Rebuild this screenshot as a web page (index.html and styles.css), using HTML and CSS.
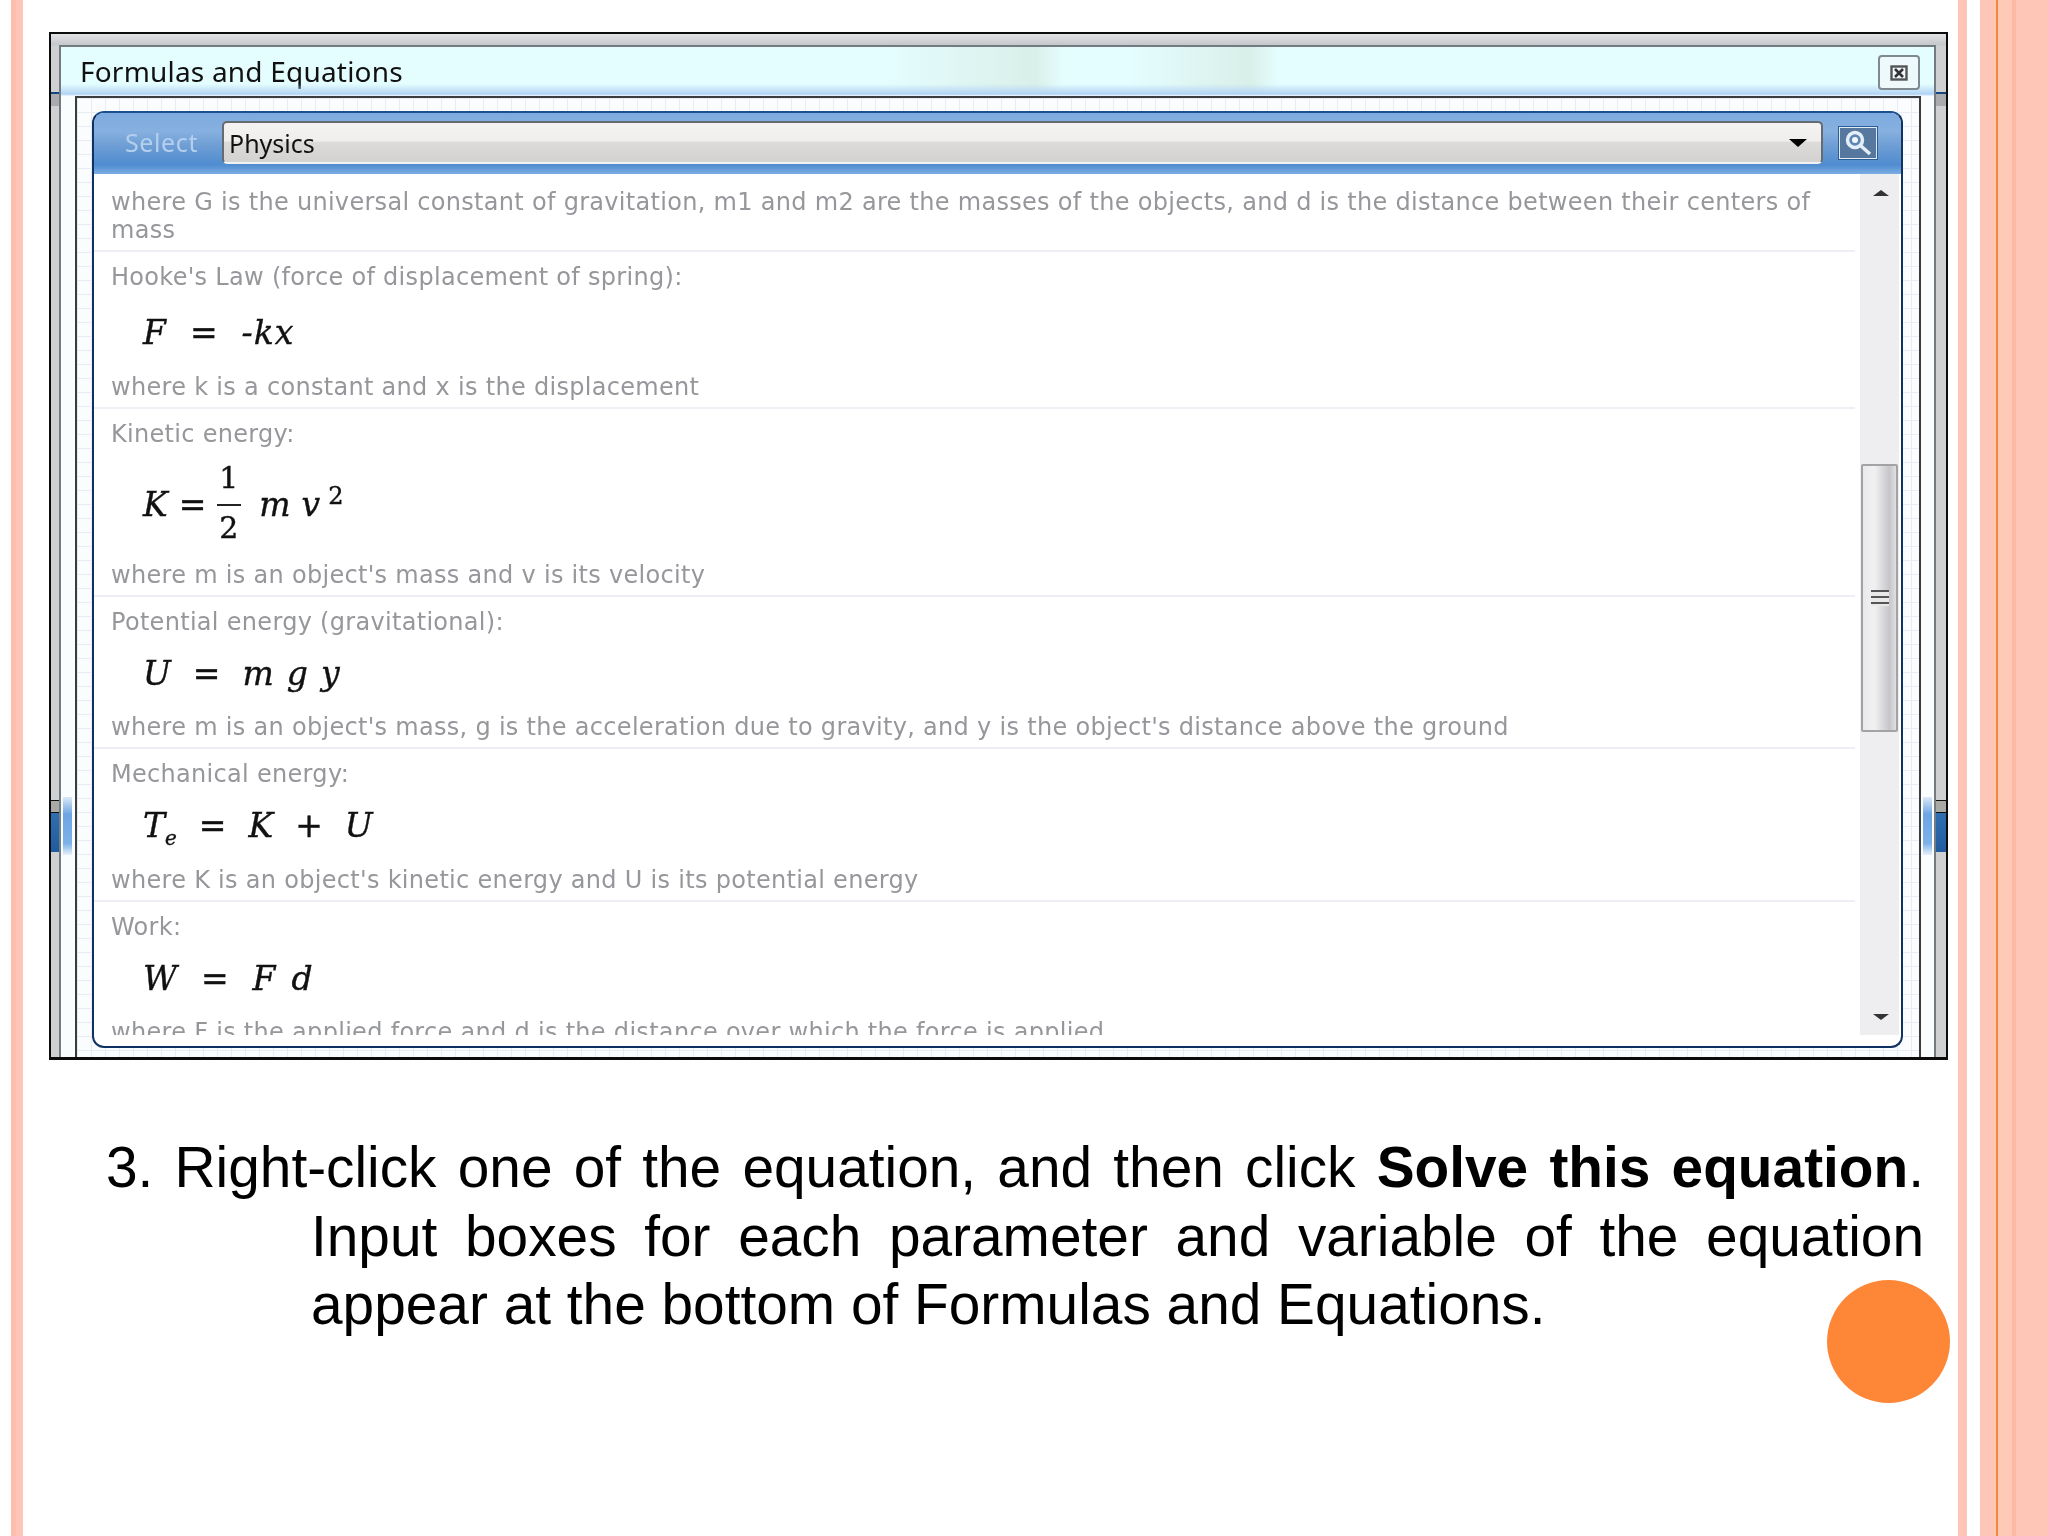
FILE: index.html
```html
<!DOCTYPE html>
<html lang="en">
<head>
    <meta charset="UTF-8">
    <title>Formulas and Equations</title>
    <link rel="stylesheet" href="styles.css">
</head>
<body>
<div class="slide">
    <div class="window">
        <div class="edge edge-top edge-l"></div>
        <div class="edge edge-top edge-r"></div>
        <div class="edge edge-low edge-l"></div>
        <div class="edge edge-low edge-r"></div>
        <div class="dialog">
            <div class="glow glow-left"></div>
            <div class="glow glow-right"></div>
            <div class="titlebar">
                <span class="title">Formulas and Equations</span>
                <button class="close">
                    <svg width="18" height="16" viewBox="0 0 18 16">
                        <rect x="1.5" y="1.5" width="15" height="13" fill="none" stroke="#555" stroke-width="2.4"/>
                        <path d="M5 4l8 8M13 4l-8 8" stroke="#333" stroke-width="2.6"/>
                    </svg>
                </button>
            </div>
            <div class="frame">
                <div class="panel">
                    <div class="panel-head">
                        <span class="select-label">Select</span>
                        <div class="select">
                            <span>Physics</span>
                            <i class="caret"></i>
                        </div>
                        <button class="search">
                            <svg width="34" height="30" viewBox="0 0 34 30">
                                <circle cx="14" cy="12" r="7.5" fill="#5e86b5" stroke="#e4eef8" stroke-width="3.5"/>
                                <circle cx="14" cy="12" r="3" fill="#f2f7fc"/>
                                <path d="M20 18l9 8" stroke="#e4eef8" stroke-width="3.5"/>
                            </svg>
                        </button>
                    </div>
                    <div class="panel-body">
                        <div class="list">
                            <div class="row row-first">
                                <p>where G is the universal constant of gravitation, m1 and m2 are the masses of the objects, and d is the distance between their centers of mass</p>
                            </div>
                            <div class="row">
                                <p>Hooke's Law (force of displacement of spring):</p>
                                <div class="eq eq-hooke"><i>F</i><b>=</b><i>-kx</i></div>
                                <p>where k is a constant and x is the displacement</p>
                            </div>
                            <div class="row">
                                <p>Kinetic energy:</p>
                                <div class="eq eq-kinetic">
                                    <i>K</i><b>=</b>
                                    <span class="frac"><span class="frac-top">1</span><span class="frac-low">2</span></span>
                                    <i>m</i><i>v<sup>2</sup></i>
                                </div>
                                <p>where m is an object's mass and v is its velocity</p>
                            </div>
                            <div class="row">
                                <p>Potential energy (gravitational):</p>
                                <div class="eq eq-short eq-pot"><i>U</i><b>=</b><span class="terms"><i>m</i><i>g</i><i>y</i></span></div>
                                <p>where m is an object's mass, g is the acceleration due to gravity, and y is the object's distance above the ground</p>
                            </div>
                            <div class="row">
                                <p>Mechanical energy:</p>
                                <div class="eq eq-mech"><i>T<sub>e</sub></i><b>=</b><i>K</i><b>+</b><i>U</i></div>
                                <p>where K is an object's kinetic energy and U is its potential energy</p>
                            </div>
                            <div class="row">
                                <p>Work:</p>
                                <div class="eq eq-short"><i>W</i><b>=</b><span class="terms terms-wide"><i>F</i><i>d</i></span></div>
                                <p>where F is the applied force and d is the distance over which the force is applied</p>
                            </div>
                        </div>
                        <div class="scrollbar">
                            <i class="arrow arrow-up"></i>
                            <div class="thumb"><span class="grip"></span></div>
                            <i class="arrow arrow-down"></i>
                        </div>
                    </div>
                </div>
            </div>
        </div>
    </div>

    <div class="step">
        <p class="step-first">3. Right-click one of the equation, and then click <strong>Solve this equation</strong>.</p>
        <p class="step-rest">Input boxes for each parameter and variable of the equation appear at the bottom of Formulas and Equations.</p>
    </div>
    <div class="dot"></div>
</div>
</body>
</html>
```

FILE: styles.css
```css
* {
    box-sizing: border-box;
}

html, body {
    margin: 0;
    height: 100%;
}

body {
    background: linear-gradient(to right,
        #fff 0, #fff 11px,
        #febeae 11px, #febeae 16px,
        #fec6b6 16px, #fec6b6 23px,
        #fff 23px, #fff 1958px,
        #fec6b6 1958px, #fec6b6 1967px,
        #fff 1967px, #fff 1980px,
        #fec6b6 1980px, #fec6b6 1996px,
        #f08a3c 1996px, #f08a3c 1998px,
        #fec9b6 1998px, #fec9b6 2012px,
        #feb9a4 2012px, #feb9a4 2016px,
        #fec6b6 2016px);
}

.slide {
    position: relative;
    height: 1536px;
    padding: 32px 0 0 49px;
    overflow: hidden;
}

.window {
    position: relative;
    width: 1899px;
    height: 1028px;
    padding: 11px 10px 0 8px;
    border: 2px solid #0c0c0c;
    border-bottom-width: 3px;
    background: linear-gradient(to bottom, #e2e3e5 0, #c4c7cb 11px, #cfd0d2 12px, #cfd0d2 100%);
    filter: blur(0.5px);
}

.edge {
    position: absolute;
    width: 8px;
}

.edge-l {
    left: 0;
}

.edge-r {
    right: 0;
    width: 10px;
}

.edge-top {
    top: 58px;
    height: 14px;
    background: linear-gradient(to bottom, #14477f 0, #14477f 2px, #a9abae 2px);
}

.edge-low {
    top: 766px;
    height: 52px;
    background: linear-gradient(to bottom, #111 0, #111 1px, #a9a9a6 1px, #a9a9a6 12px, #111 12px, #111 13px, #2f6fb0 13px, #1f5c9f 100%);
}

.dialog {
    position: relative;
    height: 100%;
    display: flex;
    flex-direction: column;
    border: 2px solid #737a80;
    border-bottom: none;
    padding: 0 13px 0 14px;
    background: #fafdfe;
}

.glow {
    position: absolute;
    top: 750px;
    width: 9px;
    height: 58px;
    background: linear-gradient(to bottom, #dbe9f8, #6da5e3 30%, #7db1e8 80%, #e6f1fb);
}

.glow-left {
    left: 2px;
}

.glow-right {
    right: 2px;
}

.titlebar {
    position: relative;
    flex: none;
    height: 49px;
    display: flex;
    justify-content: space-between;
    margin: 0 -13px 0 -14px;
    padding: 6px 14px 0 19px;
    background:
        linear-gradient(to right, transparent 44%, #d9efe9 52%, transparent 53.5%, transparent 57%, #d9efe9 63.5%, transparent 65%),
        #e4fdfe;
}

.titlebar::after {
    content: "";
    position: absolute;
    left: 0;
    right: 0;
    bottom: 0;
    height: 12px;
    background: linear-gradient(to bottom, transparent, #b2d3f5 85%, #f6fbff 100%);
}

.title {
    font: 28px/36px "Noto Sans", sans-serif;
    letter-spacing: 0.2px;
    color: #111;
}

.close {
    position: relative;
    z-index: 1;
    width: 42px;
    height: 35px;
    margin-top: 2px;
    padding: 0;
    border: 2px solid #7f8a90;
    border-radius: 4px;
    background: #eef9fc;
    display: flex;
    align-items: center;
    justify-content: center;
}

.frame {
    flex: 1;
    min-height: 0;
    padding: 13px 16px 9px 15px;
    border: 2px solid #3c3c3c;
    border-bottom: none;
    background-color: #fbfcfe;
    background-image:
        linear-gradient(#e7ebf3 1px, transparent 1px),
        linear-gradient(to right, #e7ebf3 1px, transparent 1px);
    background-size: 14px 14px;
}

.panel {
    height: 100%;
    display: flex;
    flex-direction: column;
    border: 2px solid #0f3262;
    border-top-color: #1c4f8e;
    border-radius: 12px;
    overflow: hidden;
    background: #fff;
}

.panel-head {
    height: 61px;
    flex: none;
    display: flex;
    align-items: flex-start;
    padding: 8px 0 0 31px;
    background: linear-gradient(to bottom, #7daadf 0, #86b0df 30%, #6d9dd4 55%, #4f8ccf 85%, #7cade4 100%);
}

.select-label {
    width: 97px;
    font: 25px/42px "Noto Sans", sans-serif;
    letter-spacing: 0.6px;
    color: #b4cfee;
}

.select {
    width: 1601px;
    height: 43px;
    display: flex;
    align-items: center;
    justify-content: space-between;
    padding: 0 14px 0 5px;
    border: 2px solid #666b72;
    border-bottom-color: #f2f2f2;
    border-radius: 5px;
    background: linear-gradient(to bottom, #f4f3f1 0, #efeeec 46%, #dcdbd9 50%, #d3d2d0 100%);
    font: 25px/38px "Noto Sans", sans-serif;
    color: #111;
}

.caret {
    width: 0;
    height: 0;
    border-left: 9px solid transparent;
    border-right: 9px solid transparent;
    border-top: 8px solid #000;
}

.search {
    width: 40px;
    height: 34px;
    margin: 5px 0 0 15px;
    padding: 0;
    border: 2px solid #e0ebf6;
    outline: 1px solid #2b5d96;
    outline-offset: -1px;
    background: #56789f;
    display: flex;
    align-items: center;
    justify-content: center;
}

.panel-body {
    flex: 1;
    min-height: 0;
    display: flex;
    padding-bottom: 11px;
}

.list {
    flex: 1;
    overflow: hidden;
    min-width: 0;
    font: 24px/28px "DejaVu Sans", sans-serif;
    letter-spacing: 0.3px;
    color: #96979b;
}

.row {
    padding: 11px 0 6px 17px;
    border-bottom: 2px solid #eeeef5;
}

.row-first {
    padding-top: 14px;
    padding-bottom: 6px;
    padding-right: 40px;
}

.row p {
    margin: 0;
}

.eq {
    display: flex;
    align-items: baseline;
    gap: 23px;
    height: 78px;
    padding-left: 32px;
    font: 33px/76px "DejaVu Serif", serif;
    letter-spacing: 1px;
    -webkit-text-stroke: 0.4px #111;
    color: #111;
}

.eq i {
    font-style: italic;
}

.eq b {
    font-family: "DejaVu Sans", sans-serif;
    font-weight: normal;
}

.eq sub {
    font-size: 20px;
    line-height: 0;
}

.eq sup {
    font-size: 24px;
    font-style: normal;
    line-height: 0;
    margin-left: 7px;
}

.terms {
    display: flex;
    gap: 12px;
}

.terms-wide {
    gap: 15px;
}

.eq-hooke {
    height: 82px;
    line-height: 84px;
}

.eq-kinetic {
    height: 113px;
    line-height: 1;
    align-items: center;
    gap: 10px;
}

.eq-short {
    height: 77px;
}

.eq-pot {
    gap: 21px;
}

.eq-mech {
    height: 78px;
    gap: 22px;
    letter-spacing: 0;
}

.frac {
    display: flex;
    flex-direction: column;
    align-items: center;
    width: 24px;
    margin-right: 8px;
    line-height: 36px;
    font-size: 30px;
}

.frac-top {
    padding-bottom: 8px;
}

.frac-low {
    border-top: 2px solid #222;
    width: 100%;
    padding: 4px 0;
    text-align: center;
}

.scrollbar {
    width: 39px;
    flex: none;
    margin-left: 5px;
    margin-right: 2px;
    background: #eeedef;
    position: relative;
}

.arrow {
    position: absolute;
    left: 13px;
    width: 0;
    height: 0;
    border-left: 8px solid transparent;
    border-right: 8px solid transparent;
}

.arrow-up {
    top: 16px;
    border-bottom: 6px solid #333;
}

.arrow-down {
    bottom: 15px;
    border-top: 6px solid #333;
}

.thumb {
    width: 37px;
    height: 268px;
    margin: 290px 0 0 1px;
    border: 2px solid #a3a3a6;
    border-radius: 2px;
    background: linear-gradient(to right, #e9e9eb 0, #f1f1f2 35%, #c6c6ca 80%, #e0e0e2 100%);
    display: flex;
    align-items: center;
    justify-content: center;
}

.grip {
    width: 18px;
    height: 16px;
    background: repeating-linear-gradient(to bottom, #555 0, #555 2px, #e8e8e8 2px, #e8e8e8 6px);
}

.step {
    width: 1818px;
    margin: 74px 0 0 57px;
    font: 56.8px/68.6px "Liberation Sans", Arial, sans-serif;
    color: #000;
    text-align: justify;
}

.step p {
    margin: 0;
}

.step-first {
    text-align-last: justify;
}

.step-rest {
    padding-left: 205px;
}

.dot {
    position: absolute;
    left: 1827px;
    top: 1280px;
    width: 123px;
    height: 123px;
    border-radius: 50%;
    background: #fe8637;
}
```
